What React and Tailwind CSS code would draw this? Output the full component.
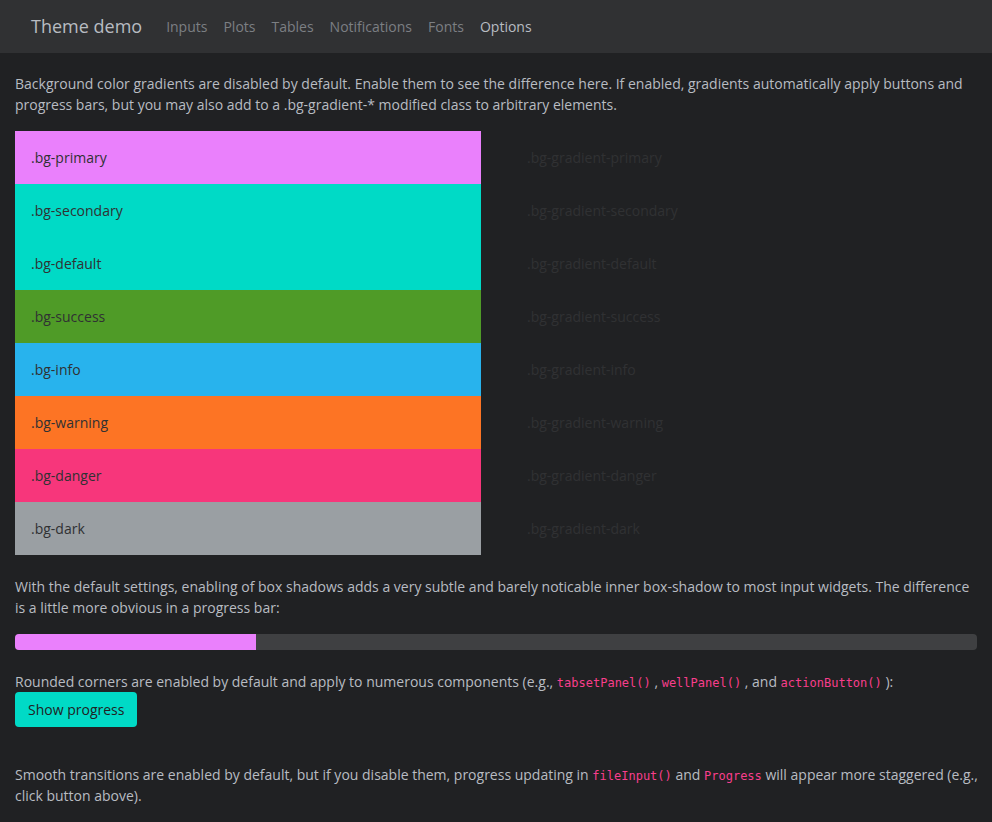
import React from "react";

const links = ["Inputs", "Plots", "Tables", "Notifications", "Fonts", "Options"];

const swatches = [
  ["primary", "bg-[#ea80fc]"],
  ["secondary", "bg-[#00dac6]"],
  ["default", "bg-[#00dac6]"],
  ["success", "bg-[#4f9b27]"],
  ["info", "bg-[#28b3ed]"],
  ["warning", "bg-[#fd7424]"],
  ["danger", "bg-[#f7367b]"],
  ["dark", "bg-[#9a9fa3]"],
];

function Code({ children }) {
  return (
    <code className="font-['DejaVu_Sans_Mono',monospace] text-[12px] leading-none text-[#f83e8c]">
      {children}
    </code>
  );
}

export default function App() {
  return (
    <div className="min-h-screen bg-[#202123] font-['Open_Sans',sans-serif] text-[14px] leading-[21px] text-[#b8bcc2]">
      <nav className="flex h-[53px] items-center bg-[#303133] px-[31px]">
        <a href="#" className="mr-4 text-[18px] leading-[27px] text-[#b8bcc2]">Theme demo</a>
        <ul className="flex">
          {links.map((l) => (
            <li key={l}>
              <a
                href="#"
                className={l === "Options" ? "px-2 text-[#b8bcc2]" : "px-2 text-[#7c7f83]"}
              >
                {l}
              </a>
            </li>
          ))}
        </ul>
      </nav>
      <main className="px-[15px] pt-5">
        <p className="mb-4">
          Background color gradients are disabled by default. Enable them to see the difference here. If enabled, gradients automatically apply buttons and progress bars, but you may also add to a .bg-gradient-* modified class to arbitrary elements.
        </p>
        <div className="grid grid-cols-2 gap-[30px]">
          <div>
            {swatches.map(([name, bg]) => (
              <div key={name} className={`${bg} p-4 text-[#303133]`}>.bg-{name}</div>
            ))}
          </div>
          <div>
            {swatches.map(([name]) => (
              <div key={name} className="p-4 text-[#303133]">.bg-gradient-{name}</div>
            ))}
          </div>
        </div>
        <p className="mt-[21px] mb-4">
          With the default settings, enabling of box shadows adds a very subtle and barely noticable inner box-shadow to most input widgets. The difference is a little more obvious in a progress bar:
        </p>
        <div className="h-4 overflow-hidden rounded bg-[#3f4042]">
          <div className="h-full w-1/4 bg-[#ea80fc]" />
        </div>
        <div className="mt-[21px]">
          Rounded corners are enabled by default and apply to numerous components (e.g., <Code>tabsetPanel()</Code> , <Code>wellPanel()</Code> , and <Code>actionButton()</Code> ):
        </div>
        <button type="button" className="block rounded bg-[#00dac6] px-[13px] py-[7px] text-[#202123]">
          Show progress
        </button>
        <p className="mt-[37px] -mr-1 pb-4">
          Smooth transitions are enabled by default, but if you disable them, progress updating in <Code>fileInput()</Code> and <Code>Progress</Code> will appear more staggered (e.g., click button above).
        </p>
      </main>
    </div>
  );
}
